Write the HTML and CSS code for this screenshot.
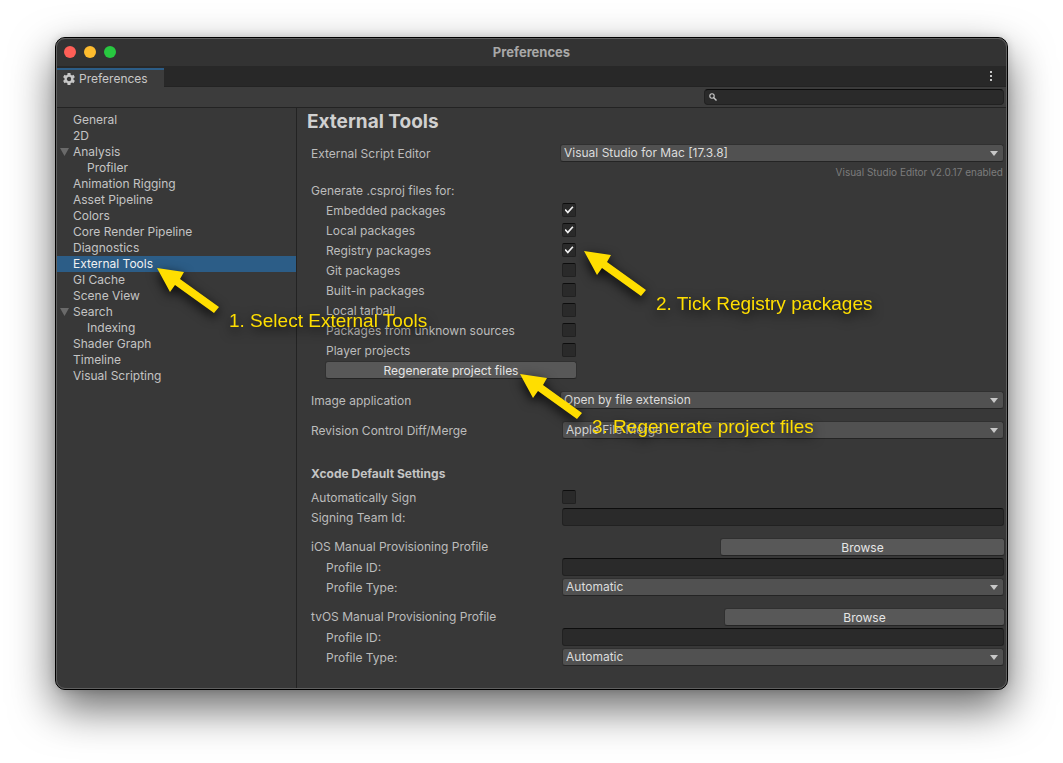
FILE: index.html
```html
<!DOCTYPE html>
<html lang="en">
<head>
<meta charset="utf-8">
<title>Preferences</title>
<link rel="stylesheet" href="styles.css">
</head>
<body>
<main class="window">
  <header class="titlebar">
    <div class="lights"><span class="light close"></span><span class="light minimize"></span><span class="light expand"></span></div>
    <h1 class="window-title">Preferences</h1>
  </header>
  <div class="tabs">
    <div class="tab">
      <svg class="gear" viewBox="0 0 12 12" aria-hidden="true"><circle cx="6" cy="6" r="3.4" fill="none" stroke="currentColor" stroke-width="2.4"/><path d="M6 0v2M6 10v2M.8 3l1.8 1M9.4 8l1.8 1M.8 9l1.8-1M9.4 4l1.8-1" stroke="currentColor" stroke-width="3"/></svg>
      <span>Preferences</span>
    </div>
    <button class="more" aria-label="More options"><svg viewBox="0 0 4 12" aria-hidden="true"><path d="M1 1h2v2H1zM1 5h2v2H1zM1 9h2v2H1z" fill="currentColor"/></svg></button>
  </div>
  <div class="toolbar">
    <label class="search">
      <svg viewBox="0 0 8 8" aria-hidden="true"><circle cx="3" cy="3" r="2.2" fill="none" stroke="currentColor" stroke-width="1.1"/><path d="M4.5 4.5L7.5 7.5" stroke="currentColor" stroke-width="1.4"/></svg>
      <input type="text" aria-label="Search preferences">
    </label>
  </div>
  <div class="body">
    <nav class="sidebar">
      <a href="#">General</a>
      <a href="#">2D</a>
      <a href="#" class="parent">Analysis</a>
      <a href="#" class="child">Profiler</a>
      <a href="#">Animation Rigging</a>
      <a href="#">Asset Pipeline</a>
      <a href="#">Colors</a>
      <a href="#">Core Render Pipeline</a>
      <a href="#">Diagnostics</a>
      <a href="#" class="selected" aria-current="page">External Tools</a>
      <a href="#">GI Cache</a>
      <a href="#">Scene View</a>
      <a href="#" class="parent">Search</a>
      <a href="#" class="child">Indexing</a>
      <a href="#">Shader Graph</a>
      <a href="#">Timeline</a>
      <a href="#">Visual Scripting</a>
    </nav>
    <section class="content">
      <h2 class="page-title">External Tools</h2>
      <div class="row wide">
        <label for="editor">External Script Editor</label>
        <span class="dropdown"><select id="editor"><option>Visual Studio for Mac [17.3.8]</option></select></span>
      </div>
      <p class="note">Visual Studio Editor v2.0.17 enabled</p>
      <fieldset class="group">
        <legend>Generate .csproj files for:</legend>
        <div class="row nested"><label for="c1">Embedded packages</label><input type="checkbox" id="c1" checked></div>
        <div class="row nested"><label for="c2">Local packages</label><input type="checkbox" id="c2" checked></div>
        <div class="row nested"><label for="c3">Registry packages</label><input type="checkbox" id="c3" checked></div>
        <div class="row nested"><label for="c4">Git packages</label><input type="checkbox" id="c4"></div>
        <div class="row nested"><label for="c5">Built-in packages</label><input type="checkbox" id="c5"></div>
        <div class="row nested"><label for="c6">Local tarball</label><input type="checkbox" id="c6"></div>
        <div class="row nested"><label for="c7">Packages from unknown sources</label><input type="checkbox" id="c7"></div>
        <div class="row nested"><label for="c8">Player projects</label><input type="checkbox" id="c8"></div>
        <button class="button regenerate">Regenerate project files</button>
      </fieldset>
      <div class="row wide spaced">
        <label for="image">Image application</label>
        <span class="dropdown"><select id="image"><option>Open by file extension</option></select></span>
      </div>
      <div class="row spaced">
        <label for="merge">Revision Control Diff/Merge</label>
        <span class="dropdown"><select id="merge"><option>Apple File Merge</option></select></span>
      </div>
      <h3 class="section-title">Xcode Default Settings</h3>
      <div class="row"><label for="sign">Automatically Sign</label><input type="checkbox" id="sign"></div>
      <div class="row"><label for="team">Signing Team Id:</label><input class="field" type="text" id="team"></div>
      <div class="profile spaced"><span>iOS Manual Provisioning Profile</span><button class="button browse-ios">Browse</button></div>
      <div class="row nested"><label for="ios-id">Profile ID:</label><input class="field" type="text" id="ios-id"></div>
      <div class="row nested"><label for="ios-type">Profile Type:</label><span class="dropdown"><select id="ios-type"><option>Automatic</option></select></span></div>
      <div class="profile spaced"><span>tvOS Manual Provisioning Profile</span><button class="button browse-tvos">Browse</button></div>
      <div class="row nested"><label for="tv-id">Profile ID:</label><input class="field" type="text" id="tv-id"></div>
      <div class="row nested"><label for="tv-type">Profile Type:</label><span class="dropdown"><select id="tv-type"><option>Automatic</option></select></span></div>
    </section>
  </div>
  <div class="callout step-1"><svg viewBox="0 0 62 45" aria-hidden="true"><path d="M0 0L27 4L23 11L62 39L57 45L18 17L13 24Z"/></svg><span>1. Select External Tools</span></div>
  <div class="callout step-2"><svg viewBox="0 0 62 45" aria-hidden="true"><path d="M0 0L27 4L23 11L62 39L57 45L18 17L13 24Z"/></svg><span>2. Tick Registry packages</span></div>
  <div class="callout step-3"><svg viewBox="0 0 62 45" aria-hidden="true"><path d="M0 0L27 4L23 11L62 39L57 45L18 17L13 24Z"/></svg><span>3. Regenerate project files</span></div>
</main>
</body>
</html>
```
FILE: styles.css
```css
* { box-sizing: border-box; }

body {
  margin: 0;
  padding: 37px 55px 73px;
  min-height: 100vh;
  display: flex;
  background: #fff;
  color: #bcbcbc;
  font: 12px/16px Inter, "Liberation Sans", sans-serif;
}

input, select, button { margin: 0; font: inherit; color: inherit; }

.window {
  position: relative;
  flex: 1;
  min-width: 0;
  display: flex;
  flex-direction: column;
  border: 1px solid #000;
  border-radius: 10px;
  background: #383838;
  box-shadow: 0 18px 44px rgba(0, 0, 0, .6), 0 0 8px rgba(0, 0, 0, .15);
}

/* Light rim just inside the window's edge */
.window::after {
  content: "";
  position: absolute;
  inset: 0;
  border: 1px solid #606060;
  border-radius: 9px;
  pointer-events: none;
}

.titlebar {
  display: grid;
  grid-template-columns: 1fr auto 1fr;
  align-items: center;
  height: 28px;
  padding: 0 8px;
  border-radius: 9px 9px 0 0;
  background: #333;
}
.lights { display: flex; gap: 8px; }
.light { width: 12px; height: 12px; border-radius: 50%; }
.close { background: #ff5f57; }
.minimize { background: #febc2e; }
.expand { background: #28c840; }
.window-title { margin: 0; font-size: 13px; line-height: 16px; font-weight: 700; color: #a8a8a8; }

.tabs {
  display: flex;
  justify-content: space-between;
  height: 21px;
  padding-top: 2px;
  background: #282828;
  box-shadow: inset 0 -1px #232323;
}
.tab {
  display: flex;
  align-items: center;
  gap: 4px;
  padding: 0 16px 0 7px;
  border-top: 2px solid #2c5d87;
  background: #3c3c3c;
  color: #c8c8c8;
}
.gear { width: 12px; height: 12px; }
.more { display: flex; align-items: center; padding: 0 14px 4px; border: 0; background: none; color: #c8c8c8; }
.more svg { width: 4px; height: 12px; }

.toolbar {
  display: flex;
  justify-content: flex-end;
  height: 21px;
  padding: 2px 3px;
  border-bottom: 1px solid #232323;
  background: #3c3c3c;
}
.search {
  display: flex;
  align-items: center;
  gap: 4px;
  width: 300px;
  padding: 0 4px;
  border: 1px solid #212121;
  border-top-color: #0d0d0d;
  border-radius: 4px;
  background: #2a2a2a;
}
.search svg { width: 8px; height: 8px; color: #c8c8c8; }
.search input { flex: 1; min-width: 0; height: 12px; padding: 0; border: 0; outline: 0; background: none; }

.body { flex: 1; display: grid; grid-template-columns: 241px 1fr; }

.sidebar { padding-top: 4px; border-right: 1px solid #232323; }
.sidebar a { display: flex; align-items: center; padding-left: 17px; color: #c4c4c4; text-decoration: none; }
.sidebar .parent { gap: 4px; padding-left: 4px; }
.sidebar .parent::before { content: ""; width: 9px; height: 8px; background: #6a6a6a; clip-path: polygon(0 0, 100% 0, 50% 100%); }
.sidebar .child { padding-left: 31px; }
.sidebar .selected { background: #2c5d87; color: #f0f0f0; }

.content { display: flex; flex-direction: column; gap: 2px; padding: 2px 3px 23px 14px; }
.page-title { margin: 0 0 8px -4px; font-size: 19px; line-height: 24px; font-weight: 700; color: #d0d0d0; }

.row { display: grid; grid-template-columns: 251px 1fr; align-items: center; height: 18px; }
.wide { grid-template-columns: 249px 1fr; }
.nested label { padding-left: 15px; }
.row label { padding-top: 2px; }
.spaced { margin-top: 10px; }

.note { margin: 0 1px 0 0; padding-top: 1px; text-align: right; font-size: 10px; line-height: 14px; color: #7c7c7c; }

.group { display: flex; flex-direction: column; gap: 2px; margin: 0; padding: 0; border: 0; min-width: 0; }
.group legend { padding: 2px 0; }

.dropdown { position: relative; display: flex; }
.dropdown select {
  appearance: none;
  width: 100%;
  height: 18px;
  padding: 0 20px 0 3px;
  border: 1px solid #303030;
  border-bottom-color: #242424;
  border-radius: 3px;
  background: #515151;
  color: #dcdcdc;
  line-height: 16px;
}
.dropdown::after {
  content: "";
  position: absolute;
  right: 6px;
  top: 7px;
  width: 8px;
  height: 5px;
  background: #c8c8c8;
  clip-path: polygon(0 0, 100% 0, 50% 100%);
  pointer-events: none;
}

.field {
  width: 100%;
  height: 18px;
  padding: 0 3px;
  border: 1px solid #212121;
  border-top-color: #0d0d0d;
  border-radius: 3px;
  background: #2a2a2a;
}

input[type="checkbox"] {
  appearance: none;
  display: grid;
  place-items: center;
  width: 14px;
  height: 14px;
  border: 1px solid #212121;
  border-top-color: #0d0d0d;
  border-radius: 2px;
  background: #2a2a2a;
}
input[type="checkbox"]:checked::before {
  content: "";
  width: 9px;
  height: 8px;
  background: #f0f0f0;
  clip-path: polygon(0 50%, 14% 38%, 36% 66%, 86% 4%, 100% 16%, 37% 96%);
}

.button {
  height: 18px;
  padding: 1px 0 0;
  border: 1px solid #303030;
  border-bottom-color: #242424;
  border-radius: 3px;
  background: #585858;
  color: #e6e6e6;
  line-height: 16px;
}
.regenerate { width: 252px; margin-left: 14px; }
.profile { display: flex; justify-content: space-between; align-items: center; height: 18px; margin-right: -1px; }
.browse-ios { width: 285px; }
.browse-tvos { width: 281px; }

.section-title { margin: 24px 0 3px; font-size: 12px; line-height: 18px; font-weight: 700; color: #c4c4c4; }

/* Tutorial annotations drawn over the window */
.callout {
  position: absolute;
  z-index: 1;
  display: flex;
  align-items: flex-start;
  gap: 10px;
  color: #ffde00;
  font: 19px/22px "Liberation Sans", Arial, sans-serif;
  white-space: nowrap;
  filter: drop-shadow(0 4px 6px rgba(0, 0, 0, .9));
  pointer-events: none;
}
.callout svg { width: 62px; height: 45px; fill: #ffde00; }
.callout span { margin-top: 42px; }
.step-1 { left: 101px; top: 230px; }
.step-2 { left: 528px; top: 213px; }
.step-3 { left: 464px; top: 336px; }
```
